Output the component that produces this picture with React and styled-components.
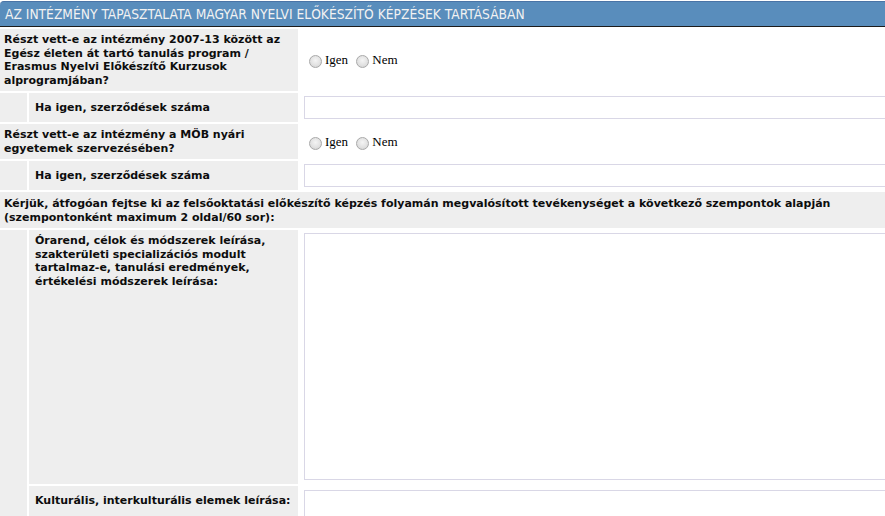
import React from "react";
import styled, { createGlobalStyle } from "styled-components";

const GlobalStyle = createGlobalStyle`
	html, body {
		margin: 0;
		padding: 0;
		background: #fff;
		overflow: hidden;
	}
`;

const Page = styled.div`
	width: 896px;
	padding-top: 1px;
	font-family: "DejaVu Sans", Verdana, sans-serif;
`;

const Header = styled.div`
	height: 24px;
	display: flex;
	align-items: center;
	padding: 0 5px;
	background: #598dbc;
	border-top: 1px solid #4a74a6;
	border-bottom: 1px solid #1c1c1c;
	border-radius: 4px 4px 0 0;
	color: #f2f2f2;
	font-family: "DejaVu Sans Condensed", Tahoma, sans-serif;
	font-size: 13.7px;
	margin-bottom: 2px;
`;

const FormGrid = styled.div`
	display: grid;
	grid-template-columns: 27px 269px 1fr;
	gap: 2px;
`;

const Indent = styled.div`
	background: #eeeeee;
	grid-row: ${p => (p.rows ? `span ${p.rows}` : "auto")};
`;

const Label = styled.div`
	grid-column: ${p => (p.full ? "1 / -1" : p.wide ? "1 / 3" : "auto")};
	background: #eeeeee;
	display: flex;
	align-items: ${p => (p.top ? "flex-start" : "center")};
	padding: ${p => p.pt || 4}px ${p => (p.indent ? 6 : 4)}px 4px;
	font-size: 11px;
	font-weight: bold;
	line-height: 13.5px;
	color: #0d0d0d;
`;

const Value = styled.div`
	display: flex;
	align-items: ${p => (p.top ? "flex-start" : "center")};
	padding: ${p => p.pt || 3}px 0 ${p => p.pb || 3}px 4px;
	background: #fff;
	font-family: "Liberation Serif", "Times New Roman", serif;
	font-size: 13px;
	color: #000;
`;

const Radio = styled.input.attrs({ type: "radio" })`
	appearance: none;
	box-sizing: border-box;
	width: 13px;
	height: 13px;
	margin: 3px 3px 0 5px;
	border-radius: 50%;
	border: 1px solid #a9a9a9;
	background: radial-gradient(circle at 50% 40%, #f4f4f4 0%, #e2e2e2 55%, #cfcfcf 100%);
`;

const TextInput = styled.input.attrs({ type: "text" })`
	box-sizing: border-box;
	width: 100%;
	height: 23px;
	border: 1px solid #d9d7e6;
	background: #fff;
	margin: 0;
`;

const TextArea = styled.textarea`
	box-sizing: border-box;
	width: 100%;
	height: ${p => p.h}px;
	border: 1px solid #d9d7e6;
	background: #fff;
	margin: 0;
	resize: none;
	display: block;
`;

function RadioPair({ name }) {
	return (
		<Value>
			<Radio name={name} />
			Igen
			<span>&nbsp;</span>
			<Radio name={name} />
			Nem
		</Value>
	);
}

export default function App() {
	return (
		<Page>
			<GlobalStyle />
			<Header>
				AZ INTÉZMÉNY TAPASZTALATA MAGYAR NYELVI ELŐKÉSZÍTŐ KÉPZÉSEK TARTÁSÁBAN
			</Header>
			<FormGrid>
				<Label wide>
					Részt vett-e az intézmény 2007-13 között az Egész életen át tartó
					tanulás program / Erasmus Nyelvi Előkészítő Kurzusok alprogramjában?
				</Label>
				<RadioPair name="llp" />

				<Indent />
				<Label indent>Ha igen, szerződések száma</Label>
				<Value>
					<TextInput />
				</Value>

				<Label wide>
					Részt vett-e az intézmény a MÖB nyári egyetemek szervezésében?
				</Label>
				<RadioPair name="mob" />

				<Indent />
				<Label indent>Ha igen, szerződések száma</Label>
				<Value>
					<TextInput />
				</Value>

				<Label full pt={5}>
					Kérjük, átfogóan fejtse ki az felsőoktatási előkészítő képzés
					folyamán megvalósított tevékenységet a következő szempontok alapján
					(szempontonként maximum 2 oldal/60 sor):
				</Label>

				<Indent rows={2} />
				<Label indent top>
					Órarend, célok és módszerek leírása, szakterületi specializációs
					modult tartalmaz-e, tanulási eredmények, értékelési módszerek
					leírása:
				</Label>
				<Value top pb={4}>
					<TextArea h={247} />
				</Value>

				<Label indent top pt={8}>
					Kulturális, interkulturális elemek leírása:
				</Label>
				<Value top pt={4} pb={4}>
					<TextArea h={60} />
				</Value>
			</FormGrid>
		</Page>
	);
}
